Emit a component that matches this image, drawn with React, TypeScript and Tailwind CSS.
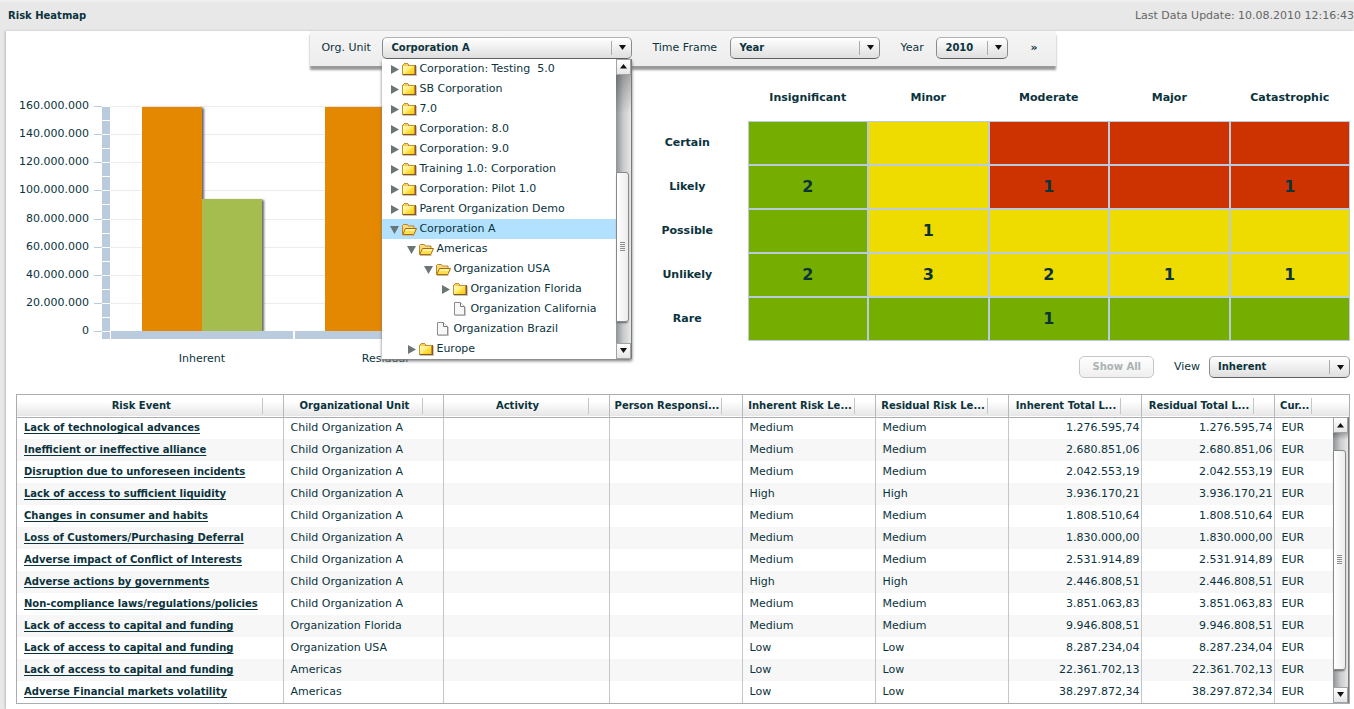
import { useState } from 'react';
import type { ReactNode } from 'react';
import clsx from 'clsx';

type TreeNode = {
  label: string;
  level: number;
  kind: 'closed' | 'open' | 'leaf';
};

const orgTree: TreeNode[] = [
  { label: 'Corporation: Testing  5.0', level: 0, kind: 'closed' },
  { label: 'SB Corporation', level: 0, kind: 'closed' },
  { label: '7.0', level: 0, kind: 'closed' },
  { label: 'Corporation: 8.0', level: 0, kind: 'closed' },
  { label: 'Corporation: 9.0', level: 0, kind: 'closed' },
  { label: 'Training 1.0: Corporation', level: 0, kind: 'closed' },
  { label: 'Corporation: Pilot 1.0', level: 0, kind: 'closed' },
  { label: 'Parent Organization Demo', level: 0, kind: 'closed' },
  { label: 'Corporation A', level: 0, kind: 'open' },
  { label: 'Americas', level: 1, kind: 'open' },
  { label: 'Organization USA', level: 2, kind: 'open' },
  { label: 'Organization Florida', level: 3, kind: 'closed' },
  { label: 'Organization California', level: 3, kind: 'leaf' },
  { label: 'Organization Brazil', level: 2, kind: 'leaf' },
  { label: 'Europe', level: 1, kind: 'closed' },
];

const impacts = ['Insignificant', 'Minor', 'Moderate', 'Major', 'Catastrophic'];

const cellColors = {
  g: 'bg-[#75ae00]',
  y: 'bg-[#eedc00]',
  r: 'bg-[#cc3300]',
};

type Cell = [keyof typeof cellColors, number?];

const heatmap: { label: string; cells: Cell[] }[] = [
  { label: 'Certain', cells: [['g'], ['y'], ['r'], ['r'], ['r']] },
  { label: 'Likely', cells: [['g', 2], ['y'], ['r', 1], ['r'], ['r', 1]] },
  { label: 'Possible', cells: [['g'], ['y', 1], ['y'], ['y'], ['y']] },
  { label: 'Unlikely', cells: [['g', 2], ['y', 3], ['y', 2], ['y', 1], ['y', 1]] },
  { label: 'Rare', cells: [['g'], ['g'], ['g', 1], ['g'], ['g']] },
];

const columns = [
  { title: 'Risk Event', width: '' },
  { title: 'Organizational Unit', width: 'w-[160px]' },
  { title: 'Activity', width: 'w-[166px]' },
  { title: 'Person Responsi...', width: 'w-[133px]' },
  { title: 'Inherent Risk Le...', width: 'w-[133px]' },
  { title: 'Residual Risk Le...', width: 'w-[133px]' },
  { title: 'Inherent Total L...', width: 'w-[133px]' },
  { title: 'Residual Total L...', width: 'w-[133px]' },
  { title: 'Cur...', width: 'w-[75px]' },
];

const risks = [
  { event: 'Lack of technological advances', unit: 'Child Organization A', level: 'Medium', loss: '1.276.595,74' },
  { event: 'Inefficient or ineffective alliance', unit: 'Child Organization A', level: 'Medium', loss: '2.680.851,06' },
  { event: 'Disruption due to unforeseen incidents', unit: 'Child Organization A', level: 'Medium', loss: '2.042.553,19' },
  { event: 'Lack of access to sufficient liquidity', unit: 'Child Organization A', level: 'High', loss: '3.936.170,21' },
  { event: 'Changes in consumer and habits', unit: 'Child Organization A', level: 'Medium', loss: '1.808.510,64' },
  { event: 'Loss of Customers/Purchasing Deferral', unit: 'Child Organization A', level: 'Medium', loss: '1.830.000,00' },
  { event: 'Adverse impact of Conflict of Interests', unit: 'Child Organization A', level: 'Medium', loss: '2.531.914,89' },
  { event: 'Adverse actions by governments', unit: 'Child Organization A', level: 'High', loss: '2.446.808,51' },
  { event: 'Non-compliance laws/regulations/policies', unit: 'Child Organization A', level: 'Medium', loss: '3.851.063,83' },
  { event: 'Lack of access to capital and funding', unit: 'Organization Florida', level: 'Medium', loss: '9.946.808,51' },
  { event: 'Lack of access to capital and funding', unit: 'Organization USA', level: 'Low', loss: '8.287.234,04' },
  { event: 'Lack of access to capital and funding', unit: 'Americas', level: 'Low', loss: '22.361.702,13' },
  { event: 'Adverse Financial markets volatility', unit: 'Americas', level: 'Low', loss: '38.297.872,34' },
];

function FolderClosed() {
  return (
    <svg width="15" height="13" viewBox="0 0 15 13" shapeRendering="crispEdges">
      <defs>
        <linearGradient id="folderFill" x1="0" y1="0" x2="1" y2="1">
          <stop offset="0" stopColor="#fffbc8" />
          <stop offset="0.5" stopColor="#ffec7a" />
          <stop offset="0.6" stopColor="#ffdf3c" />
          <stop offset="1" stopColor="#f7c81e" />
        </linearGradient>
      </defs>
      <path d="M14 3h1v10H1v-1h13z" fill="#c9c2cf" />
      <path d="M1 1h1V0h4v1h1v1h6v10H0V2h1z" fill="#c08f3c" />
      <path d="M1 2h5v1h6v8H1z" fill="url(#folderFill)" />
      <path d="M2 1h4v2H1V2h1z" fill="#f9cf4c" />
      <path d="M13 2h1v10H1v-1h12z" fill="#8a5a08" />
    </svg>
  );
}

function FolderOpen() {
  return (
    <svg width="15" height="13" viewBox="0 0 15 13">
      <path d="M.5 11.5v-9l1-1h4l1 1.500h5.500v3" fill="#fbdc78" stroke="#b98432" />
      <path d="M.7 11.500L3.500 5.500h11l-2.700 6z" fill="#ffe04a" stroke="#a86d10" />
      <path d="M4 6.500h9M3.500 7.500h9" stroke="#fff3a8" />
      <path d="M1 12.500h11.500" stroke="#c9b8a0" />
    </svg>
  );
}

function DocumentIcon() {
  return (
    <svg width="14" height="14" viewBox="0 0 14 14">
      <path d="M12.500 5v9M2 13.500h11" stroke="#ccc" />
      <path d="M1.500.5h6l4 4v8.500h-10z" fill="#f8f8f8" stroke="#8c8c8c" />
      <path d="M7.500.5v4h4" fill="#fff" stroke="#777" />
    </svg>
  );
}

function Disclosure({ open }: { open: boolean }) {
  return (
    <svg width="9" height="9" viewBox="0 0 9 9" fill="#6b7575">
      {open ? <path d="M0 1h9L4.500 9z" /> : <path d="M1 0l8 4.500L1 9z" />}
    </svg>
  );
}

const nodeIcons = {
  closed: <FolderClosed />,
  open: <FolderOpen />,
  leaf: <DocumentIcon />,
};

function Arrow({ up }: { up?: boolean }) {
  return (
    <svg width="7" height="5" viewBox="0 0 7 5" fill="#111">
      {up ? <path d="M3.500 0L7 4.500H0z" /> : <path d="M0 0h7L3.500 5z" />}
    </svg>
  );
}

type DropdownProps = {
  id: string;
  label: string;
  value: string;
  labelWidth: string;
  width: string;
  children?: ReactNode;
};

function Dropdown({ id, label, value, labelWidth, width, children }: DropdownProps) {
  return (
    <div className="flex items-center">
      <label htmlFor={id} className={clsx('shrink-0 whitespace-nowrap', labelWidth)}>
        {label}
      </label>
      <div className={clsx('relative', width)}>
        <select
          id={id}
          defaultValue={value}
          className="block h-[22px] w-full appearance-none rounded-[5px] border border-[#8a8d90] border-t-[#b0b3b5] border-b-[#5c6064] bg-linear-to-b from-white to-[#dfdfdf] pr-6 pl-2 text-[10px] font-bold"
        >
          <option>{value}</option>
        </select>
        <span className="pointer-events-none absolute inset-y-1 right-0 flex w-[21px] items-center justify-center border-l border-[#a9adb0]">
          <svg width="7" height="5" viewBox="0 0 7 5" fill="#111">
            <path d="M0 0h7L3.500 5z" />
          </svg>
        </span>
        {children}
      </div>
    </div>
  );
}

type ScrollbarProps = {
  before: string;
  thumb: string;
  after: string;
};

function Scrollbar({ before, thumb, after }: ScrollbarProps) {
  const button =
    'flex h-4 shrink-0 items-center justify-center border border-[#a0a4a6] bg-linear-to-b from-white to-[#e6e6e6]';

  return (
    <div className="flex w-4 shrink-0 flex-col border-r border-[#777a7d] bg-linear-to-r from-[#8f9396] via-[#c9cbcc] to-[#e8e8e8]">
      <button type="button" aria-label="Scroll up" className={button}>
        <Arrow up />
      </button>
      <div className={clsx('basis-0 bg-linear-to-b from-black/25 to-transparent to-40%', before)} />
      <div
        className={clsx(
          'mr-[2px] flex basis-0 flex-col items-center justify-center gap-px rounded-r-[3px] border border-[#85898c] bg-linear-to-r from-white to-[#ececec] shadow-[0_2px_2px_-1px_#666]',
          thumb,
        )}
      >
        {[0, 1, 2, 3, 4].map((line) => (
          <span key={line} className="h-px w-[5px] bg-[#8a8d90]" />
        ))}
      </div>
      <div className={clsx('basis-0', after)} />
      <button type="button" aria-label="Scroll down" className={button}>
        <Arrow />
      </button>
    </div>
  );
}

function OrgTree() {
  const [selected, setSelected] = useState('Corporation A');

  return (
    <div className="absolute top-full left-0 z-10 flex w-full bg-white shadow-[0_2px_3px_#777]">
      <ul className="min-w-0 flex-1">
        {orgTree.map((node) => (
          <li key={node.label}>
            <button
              type="button"
              onClick={() => setSelected(node.label)}
              style={{ paddingLeft: 8 + node.level * 17 }}
              className={clsx(
                'flex h-5 w-full items-center pt-px whitespace-pre',
                node.label === selected && 'bg-[#b2e1ff]',
              )}
            >
              <span className="w-3 shrink-0">
                {node.kind !== 'leaf' && <Disclosure open={node.kind === 'open'} />}
              </span>
              <span className="w-[17px] shrink-0">{nodeIcons[node.kind]}</span>
              {node.label}
            </button>
          </li>
        ))}
      </ul>
      <Scrollbar before="grow-[98]" thumb="grow-[149]" after="grow-[21]" />
    </div>
  );
}

function Toolbar() {
  return (
    <div className="mx-auto flex h-[35px] w-fit items-center gap-5 bg-linear-to-b from-[#f5f5f5] to-[#ededed] pr-4 pb-[2px] pl-[11px] shadow-[0_4px_2px_#999]">
      <Dropdown id="org-unit" label="Org. Unit" value="Corporation A" labelWidth="w-[61px]" width="w-[250px]">
        <OrgTree />
      </Dropdown>
      <Dropdown id="time-frame" label="Time Frame" value="Year" labelWidth="w-[78px]" width="w-[150px]" />
      <Dropdown id="year" label="Year" value="2010" labelWidth="w-[36px]" width="w-[72px]" />
      <button type="button" aria-label="More filters" className="px-[2px] font-bold">
        »
      </button>
    </div>
  );
}

const axisTop = 32;
const axisBottom = 257;
const axisStep = (axisBottom - axisTop) / 8;

function LossChart() {
  const ticks = [0, 1, 2, 3, 4, 5, 6, 7, 8];

  return (
    <svg
      width="480"
      height="300"
      role="img"
      aria-label="Inherent and residual loss"
      className="text-[11px]"
      fill="#0b333c"
    >
      {ticks.map((tick) => {
        const y = Math.round(axisBottom - tick * axisStep);
        return (
          <g key={tick}>
            <text x="73" y={y + 3} textAnchor="end">
              {tick === 0 ? '0' : `${tick * 20}.000.000`}
            </text>
            <path d={`M78 ${y + 0.5}h8`} stroke="#b9cbdc" />
            {tick > 0 && <path d={`M94 ${y + 0.5}h368`} stroke="#ececec" />}
          </g>
        );
      })}
      <g shapeRendering="crispEdges">
        <path d="M86 33h8v232h-8z" fill="#b9cbdc" />
        {Array.from({ length: 16 }, (_, i) => (
          <path key={i} d={`M86 ${Math.round(axisBottom - (i * axisStep) / 2) + 0.5}h8`} stroke="#fff" />
        ))}
      </g>
      <g className="[filter:drop-shadow(2px_1px_1px_#666)]">
        <path d="M126 33h60v224h-60z" fill="#e48701" />
        <path d="M309 33h60v224h-60z" fill="#e48701" />
      </g>
      <path d="M186 125h60v132h-60z" fill="#a5bc4e" className="[filter:drop-shadow(2px_1px_1px_#666)]" />
      <path d="M95 257h182v8H95zM279 257h183v8H279z" fill="#b9cbdc" />
      <text x="186" y="288" textAnchor="middle">
        Inherent
      </text>
      <text x="369" y="288" textAnchor="middle">
        Residual
      </text>
    </svg>
  );
}

function Heatmap() {
  return (
    <table className="w-full table-fixed border-separate border-spacing-0 text-center text-[11px]">
      <thead>
        <tr className="h-[46px]">
          <td />
          {impacts.map((impact) => (
            <th key={impact} scope="col">
              {impact}
            </th>
          ))}
        </tr>
      </thead>
      <tbody>
        {heatmap.map((row) => (
          <tr key={row.label} className="h-11">
            <th scope="row">{row.label}</th>
            {row.cells.map(([color, count], index) => (
              <td key={index} className={clsx('border border-[#b9cbdc] p-0 text-base font-bold', cellColors[color])}>
                {count}
              </td>
            ))}
          </tr>
        ))}
      </tbody>
    </table>
  );
}

function RiskTable() {
  return (
    <div className="relative border border-[#a9adb0]">
      <table className="w-full table-fixed border-collapse whitespace-nowrap">
        <thead>
          <tr className="h-[22px] border-b border-[#a9adb0] bg-linear-to-b from-white from-30% to-[#e6e6e6] text-[10px]">
            {columns.map((column) => (
              <th
                key={column.title}
                scope="col"
                className={clsx('border-r border-[#b7babc] p-0 last:border-r-0', column.width)}
              >
                <div
                  className={clsx(
                    'h-4 border-r border-[#c4c7c9] pl-1 text-center leading-4',
                    column.title === 'Cur...' ? 'mr-[37px]' : 'mr-5',
                  )}
                >
                  {column.title}
                </div>
              </th>
            ))}
          </tr>
        </thead>
        <tbody>
          {risks.map((risk, index) => (
            <tr
              key={index}
              className="h-[22px] even:bg-[#f7f7f7] *:border-r *:border-[#c4c7c9] *:p-0 *:pl-[7px] *:last:border-r-0"
            >
              <td>
                <a href="#risk" className="text-[10px] font-bold underline underline-offset-2">
                  {risk.event}
                </a>
              </td>
              <td>{risk.unit}</td>
              <td />
              <td />
              <td>{risk.level}</td>
              <td>{risk.level}</td>
              <td className="text-right">
                <span className="pr-px">{risk.loss}</span>
              </td>
              <td className="text-right">
                <span className="pr-px">{risk.loss}</span>
              </td>
              <td>EUR</td>
            </tr>
          ))}
        </tbody>
      </table>
      <div className="absolute top-[22px] right-0 bottom-0 flex">
        <Scrollbar before="grow-[17]" thumb="grow-[220]" after="grow-[17]" />
      </div>
    </div>
  );
}

export default function App() {
  return (
    <div className="flex min-h-screen flex-col overflow-x-hidden border-t-2 border-[#f0f0f0] bg-[#e8e8e8] font-['DejaVu_Sans',Verdana,sans-serif] text-[11px] leading-4 text-[#0b333c]">
      <header className="flex h-[29px] items-center justify-between pb-[2px] pl-2 whitespace-nowrap">
        <h1 className="text-[10px] font-bold">Risk Heatmap</h1>
        <p className="text-[#666]">Last Data Update: 10.08.2010 12:16:43</p>
      </header>

      <main className="ml-[6px] flex-1 bg-white pr-1 pb-[5px] pl-[10px] shadow-[-1px_0_2px_#bbb]">
        <Toolbar />

        <div className="flex pt-[9px]">
          <div className="-mt-px w-[611px] shrink-0">
            <LossChart />
          </div>
          <div className="min-w-0 flex-1">
            <Heatmap />
            <div className="flex items-center justify-end gap-5 pt-[15px]">
              <button
                type="button"
                disabled
                className="h-[22px] rounded-[5px] border border-[#c4c7c9] bg-linear-to-b from-white to-[#efefef] px-3 text-[10px] font-bold text-[#aab3b3]"
              >
                Show All
              </button>
              <Dropdown id="view" label="View" value="Inherent" labelWidth="w-[35px]" width="w-[141px]" />
            </div>
          </div>
        </div>

        <div className="pt-4">
          <RiskTable />
        </div>
      </main>
    </div>
  );
}
